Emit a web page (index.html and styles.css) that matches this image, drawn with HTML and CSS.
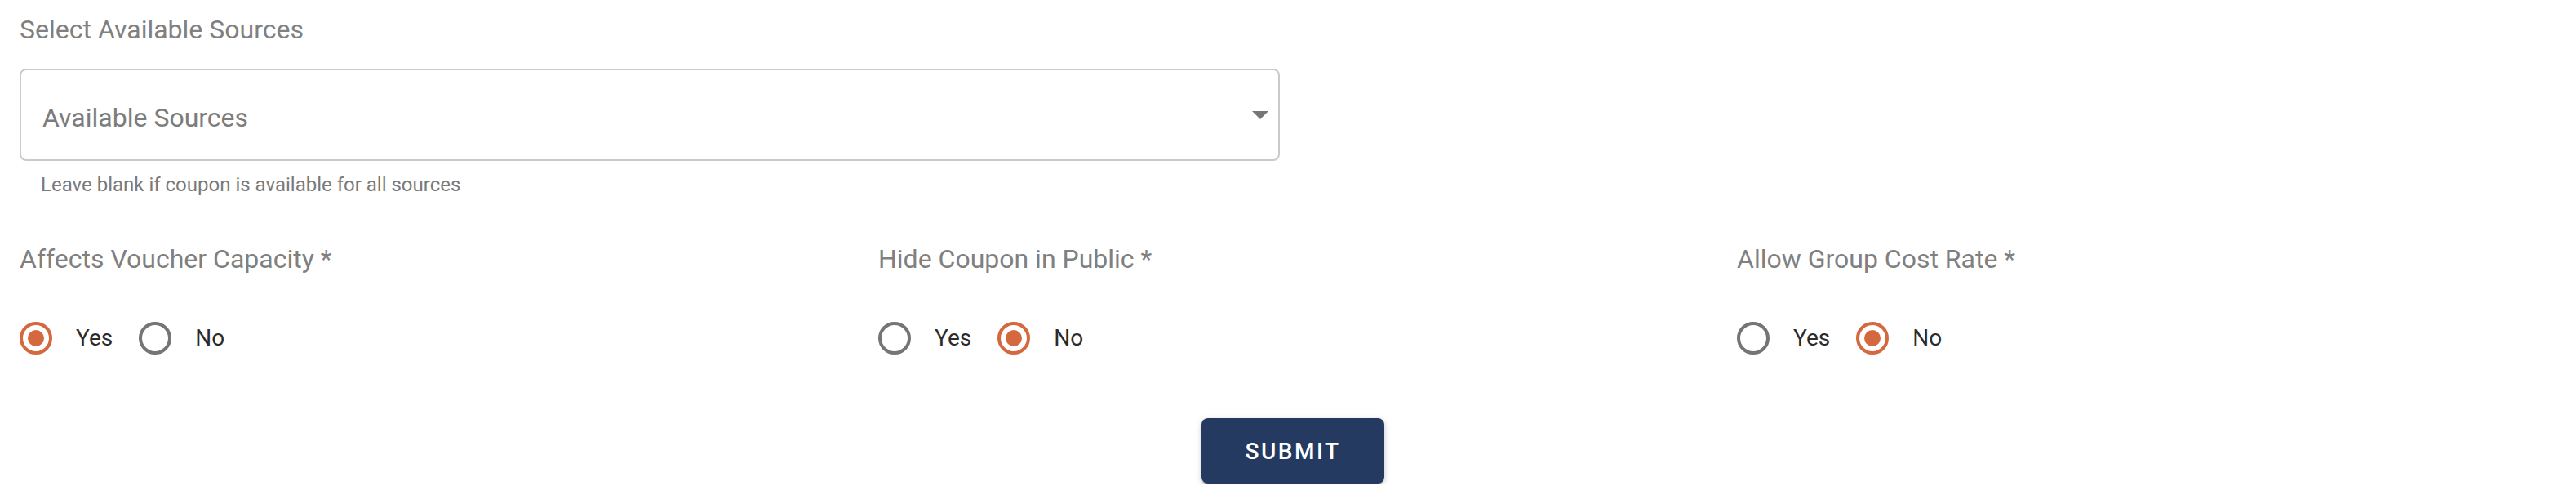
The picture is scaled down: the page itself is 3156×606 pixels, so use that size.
FILE: index.html
```html
<!DOCTYPE html>
<html lang="en">
<head>
    <meta charset="UTF-8">
    <meta name="viewport" content="width=device-width, initial-scale=1.0">
    <title>Coupon Settings</title>
    <link rel="stylesheet" href="styles.css">
</head>

<body>
    <form class="coupon-form">
        <div class="sources">
            <div class="field-label">Select Available Sources</div>
            <div class="select-box">
                <span class="placeholder">Available Sources</span>
                <span class="arrow"></span>
            </div>
            <div class="helper">Leave blank if coupon is available for all sources</div>
        </div>

        <div class="options-row">
            <div class="option-group">
                <div class="group-label">Affects Voucher Capacity *</div>
                <div class="radios">
                    <label class="radio"><span class="circle checked"></span>Yes</label>
                    <label class="radio"><span class="circle"></span>No</label>
                </div>
            </div>
            <div class="option-group">
                <div class="group-label">Hide Coupon in Public *</div>
                <div class="radios">
                    <label class="radio"><span class="circle"></span>Yes</label>
                    <label class="radio"><span class="circle checked"></span>No</label>
                </div>
            </div>
            <div class="option-group">
                <div class="group-label">Allow Group Cost Rate *</div>
                <div class="radios">
                    <label class="radio"><span class="circle"></span>Yes</label>
                    <label class="radio"><span class="circle checked"></span>No</label>
                </div>
            </div>
        </div>

        <div class="actions">
            <button type="button" class="submit-btn">SUBMIT</button>
        </div>
    </form>
</body>
</html>
```

FILE: styles.css
```css
body {
    margin: 0;
    background: #fff;
    font-family: Roboto, "Liberation Sans", sans-serif;
}

.coupon-form {
    padding-top: 12px;
}

/* top half: sources select */
.sources {
    width: 1578px;
    box-sizing: border-box;
    padding: 0 10px 0 24px;
}

.field-label {
    font-size: 32px;
    line-height: 48px;
    color: #808080;
}

.select-box {
    margin-top: 24px;
    height: 113px;
    box-sizing: border-box;
    border: 2px solid #cacaca;
    border-radius: 8px;
    padding: 7px 12px 0 26px;
    display: flex;
    align-items: center;
    justify-content: space-between;
}

.placeholder {
    font-size: 32px;
    color: #7c7c7c;
}

.arrow {
    width: 0;
    height: 0;
    border-left: 10px solid transparent;
    border-right: 10px solid transparent;
    border-top: 10px solid #767676;
    margin-bottom: 6px;
}

.helper {
    margin-top: 13px;
    padding-left: 26px;
    font-size: 24px;
    line-height: 32px;
    color: #7a7a7a;
}

/* radio groups */
.options-row {
    margin-top: 51px;
    display: grid;
    grid-template-columns: repeat(3, 1fr);
}

.option-group {
    padding-left: 24px;
}

.group-label {
    font-size: 32px;
    line-height: 48px;
    color: #808080;
}

.radios {
    margin-top: 53px;
    display: flex;
    gap: 32px;
}

.radio {
    display: flex;
    align-items: center;
    gap: 29px;
    font-size: 28px;
    line-height: 40px;
    color: #2b2b2b;
}

.circle {
    width: 40px;
    height: 40px;
    box-sizing: border-box;
    border: 4px solid #757575;
    border-radius: 50%;
    display: flex;
    align-items: center;
    justify-content: center;
}

.circle.checked {
    border-color: #d4693f;
}

.circle.checked::after {
    content: "";
    width: 20px;
    height: 20px;
    border-radius: 50%;
    background: #d4693f;
}

.actions {
    margin-top: 78px;
    padding-left: 12px;
    display: flex;
    justify-content: center;
}

.submit-btn {
    width: 224px;
    height: 80px;
    border: none;
    border-radius: 8px;
    background: #243a60;
    color: #fff;
    font-family: Roboto, "Liberation Sans", sans-serif;
    font-size: 28px;
    font-weight: 500;
    letter-spacing: 2.5px;
    box-shadow: 0 4px 2px -2px rgba(0, 0, 0, 0.2), 0 2px 4px rgba(0, 0, 0, 0.14), 0 2px 10px rgba(0, 0, 0, 0.12);
}
```
